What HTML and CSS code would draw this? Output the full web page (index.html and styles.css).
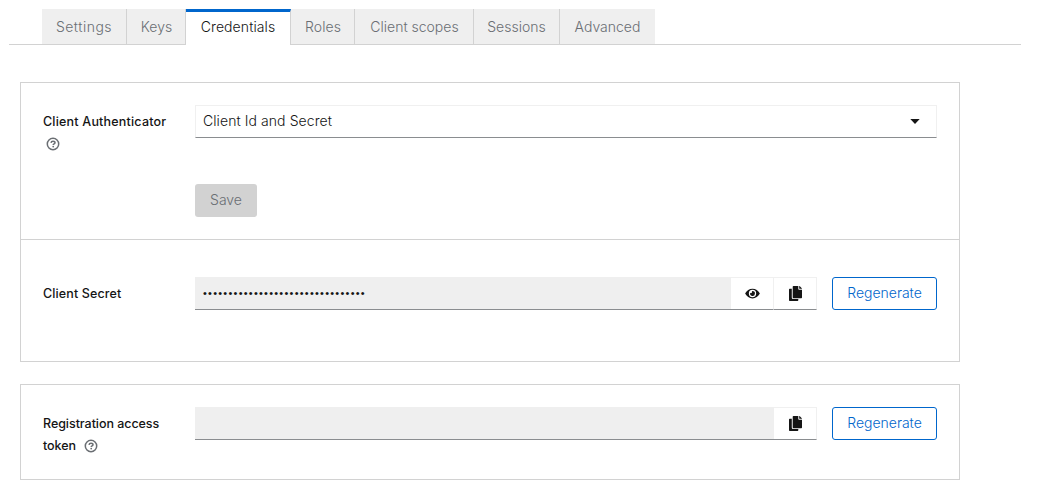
FILE: index.html
```html
<!DOCTYPE html>
<html lang="en">
<head>
<meta charset="utf-8">
<title>Client credentials</title>
<link rel="stylesheet" href="styles.css">
</head>
<body>
<svg class="defs" width="0" height="0">
  <symbol id="help" viewBox="0 0 14 14"><circle cx="7" cy="7" r="5.700" fill="none" stroke="currentColor" stroke-width="1.500"/><path d="M5 5.800C5.200 4.500 6 4.200 7 4.200c1.200 0 2 .6 2 1.500C9 6.900 7.200 6.800 7.200 8" fill="none" stroke="currentColor" stroke-width="1.500"/><circle cx="7.200" cy="9.600" r=".9" fill="currentColor"/></symbol>
  <symbol id="copy" viewBox="0 0 448 512"><path fill="currentColor" d="M320 448v40c0 13.255-10.745 24-24 24H24c-13.255 0-24-10.745-24-24V120c0-13.255 10.745-24 24-24h72v296c0 30.879 25.121 56 56 56h168zm0-344V0H152c-13.255 0-24 10.745-24 24v368c0 13.255 10.745 24 24 24h272c13.255 0 24-10.745 24-24V128H344c-13.200 0-24-10.800-24-24zm120.971-31.029L375.029 7.029A24 24 0 0 0 358.059 0H352v96h96v-6.059a24 24 0 0 0-7.029-16.970z"/></symbol>
  <symbol id="eye" viewBox="0 0 576 512"><path fill="currentColor" fill-rule="evenodd" d="M572.520 241.400C518.290 135.590 410.930 64 288 64S57.680 135.640 3.480 241.410a32.350 32.350 0 0 0 0 29.190C57.710 376.410 165.070 448 288 448s230.320-71.640 284.520-177.410a32.350 32.350 0 0 0 0-29.190zM288 400a144 144 0 1 1 144-144 143.930 143.930 0 0 1-144 144zm0-240a95.310 95.310 0 0 0-25.310 3.790 47.850 47.850 0 0 1-66.900 66.900A95.780 95.780 0 1 0 288 160z"/></symbol>
</svg>
<nav class="tabs">
  <a class="tab settings">Settings</a>
  <a class="tab keys">Keys</a>
  <a class="tab credentials active">Credentials</a>
  <a class="tab roles">Roles</a>
  <a class="tab scopes">Client scopes</a>
  <a class="tab sessions">Sessions</a>
  <a class="tab advanced">Advanced</a>
</nav>
<main class="content">
  <section class="card">
    <div class="group authenticator">
      <div class="row">
        <div class="label"><span class="label-auth">Client Authenticator</span><br><svg class="help"><use href="#help"/></svg></div>
        <div class="select"><span>Client Id and Secret</span><svg class="caret" viewBox="0 0 10 5"><path d="M.3 0h9.400L5 5z"/></svg></div>
      </div>
      <button class="save">Save</button>
    </div>
    <div class="group secret">
      <div class="row">
        <div class="label"><span class="label-secret">Client Secret</span></div>
        <div class="field"><span class="dots">••••••••••••••••••••••••••••••••</span></div>
        <button class="control"><svg class="eye"><use href="#eye"/></svg></button>
        <button class="control"><svg class="copy"><use href="#copy"/></svg></button>
        <button class="regenerate">Regenerate</button>
      </div>
    </div>
  </section>
  <section class="card">
    <div class="group token">
      <div class="row">
        <div class="label"><span class="label-token">Registration access</span><br><span class="label-token">token</span><svg class="help"><use href="#help"/></svg></div>
        <div class="field"></div>
        <button class="control"><svg class="copy"><use href="#copy"/></svg></button>
        <button class="regenerate">Regenerate</button>
      </div>
    </div>
  </section>
</main>
</body>
</html>
```
FILE: styles.css
```css
* { box-sizing: border-box; }
body { margin: 0; background: #fff; color: #151515; font: 300 14px/22px Inter, "Liberation Sans", sans-serif; }
button { font: inherit; padding: 0; }
.defs { display: block; }
.tabs { display: flex; height: 36px; margin: 9px 25px 0 9px; padding-left: 33px; border-bottom: 1px solid #d2d2d2; }
.tab { height: 35px; background: #efefef; color: #6a6e73; text-align: center; line-height: 36px; border-right: 1px solid #d2d2d2; white-space: nowrap; }
.settings { width: 85px; letter-spacing: .5px; }
.keys { width: 59px; padding-left: 1px; }
.credentials { width: 105px; letter-spacing: .1px; }
.roles { width: 64px; padding-left: 1px; letter-spacing: .1px; }
.scopes { width: 119px; padding-left: 1px; }
.sessions { width: 86px; }
.advanced { width: 95px; border-right: 0; }
.tab.active { height: 36px; background: #fff; color: #151515; border-top: 3px solid #06c; line-height: 30px; }
.content { padding: 37px 0 0 20px; }
.card { width: 940px; border: 1px solid #d2d2d2; margin-bottom: 22px; }
.group { padding: 22px; }
.authenticator { height: 156px; }
.secret { height: 122px; padding-top: 37px; border-top: 1px solid #d2d2d2; }
.token { height: 94px; }
.row { display: flex; height: 33px; }
.label { width: 152px; flex: none; padding-top: 6px; font-size: 12.500px; font-weight: 500; white-space: nowrap; }
.label-auth { letter-spacing: .2px; }
.label-secret { letter-spacing: .12px; }
.label-token { letter-spacing: -.05px; }
.help { width: 14px; height: 14px; margin-left: 3px; vertical-align: -2.500px; color: #6a6e73; }
.label-token + .help { margin-left: 8px; }
.select { display: flex; flex: 1; align-items: center; justify-content: space-between; border: 1px solid #f0f0f0; border-bottom-color: #8a8d90; padding: 0 16px 1px 7px; letter-spacing: .08px; }
.caret { width: 10px; height: 5px; fill: #151515; }
.save { display: block; width: 62px; height: 33px; margin: 46px 0 0 152px; padding-bottom: 1px; background: #d2d2d2; border: 0; border-radius: 3px; color: #6a6e73; }
.field { flex: 1; background: #efefef; border-bottom: 1px solid #8a8d90; padding: 5px 8px; }
.dots { display: block; font: 11px/22px "Liberation Sans", sans-serif; letter-spacing: 1.240px; }
.control { display: flex; align-items: center; justify-content: center; width: 43px; background: #fff; border: 1px solid #f0f0f0; border-left: 0; border-bottom-color: #8a8d90; padding-bottom: 1px; color: #151515; }
.eye { width: 15px; height: 13px; }
.copy { width: 13px; height: 15px; }
.regenerate { width: 105px; margin-left: 15px; padding-bottom: 1px; border: 1px solid #06c; border-radius: 3px; background: #fff; color: #06c; }
```
